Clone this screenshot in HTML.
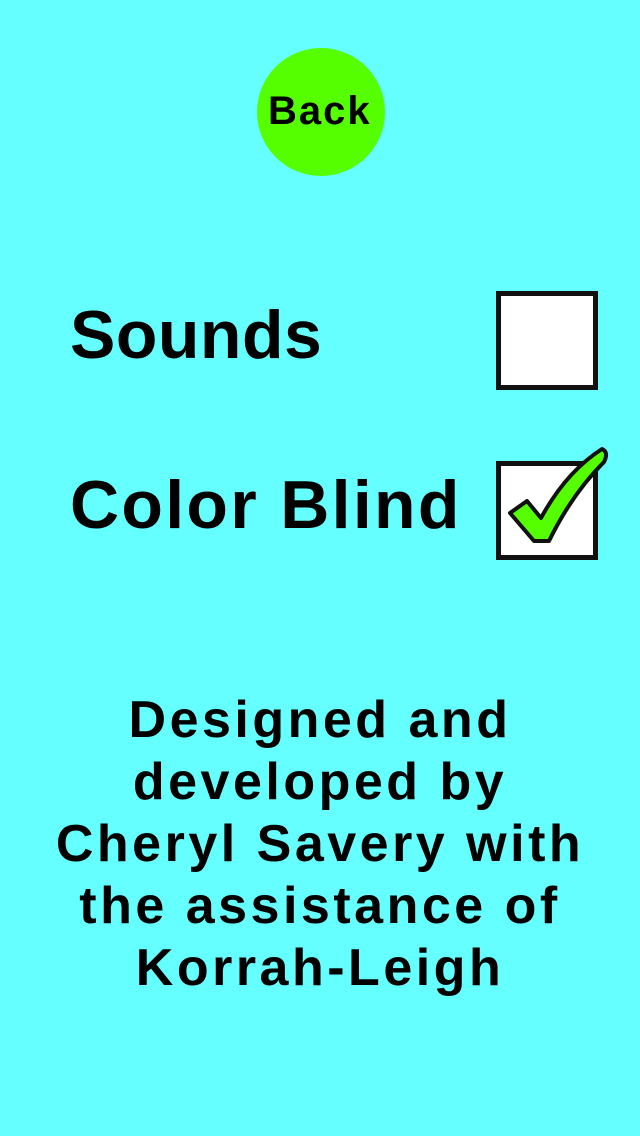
<!DOCTYPE html>
<html><head><style>
html,body{margin:0;padding:0}
body{width:640px;height:1136px;background:#66FFFF;position:relative;overflow:hidden;font-family:"Liberation Sans",sans-serif;font-weight:bold;color:#000}
.circ{position:absolute;left:257px;top:48px;width:128px;height:128px;border-radius:50%;background:#55FF00}
.t{position:absolute;white-space:nowrap;line-height:1}
.box{position:absolute;left:496px;width:92px;height:89px;border:5px solid #111;background:#fff}
.credits{position:absolute;left:0;width:640px;top:689px;text-align:center;font-size:52px;line-height:62px;letter-spacing:3.5px}
</style></head><body>
<div class="circ"></div>
<div class="t" style="left:268px;top:91px;font-size:40px;letter-spacing:2px">Back</div>
<div class="t" style="left:70px;top:301px;font-size:68px;letter-spacing:0.5px">Sounds</div>
<div class="t" style="left:70px;top:471px;font-size:68px;letter-spacing:2.3px">Color Blind</div>
<div class="box" style="top:291px"></div>
<div class="box" style="top:461px"></div>
<svg style="position:absolute;left:0;top:0" width="640" height="1136">
<path d="M510,513 L527,501 L541,518 Q566,472 602,449 Q609,452 604,462 Q572,494 549,541 L534,541 Z" fill="#55FF00" stroke="#111" stroke-width="4" stroke-linejoin="round"/>
</svg>
<div class="credits">Designed and<br>developed by<br>Cheryl Savery with<br>the assistance of<br>Korrah-Leigh</div>
</body></html>
